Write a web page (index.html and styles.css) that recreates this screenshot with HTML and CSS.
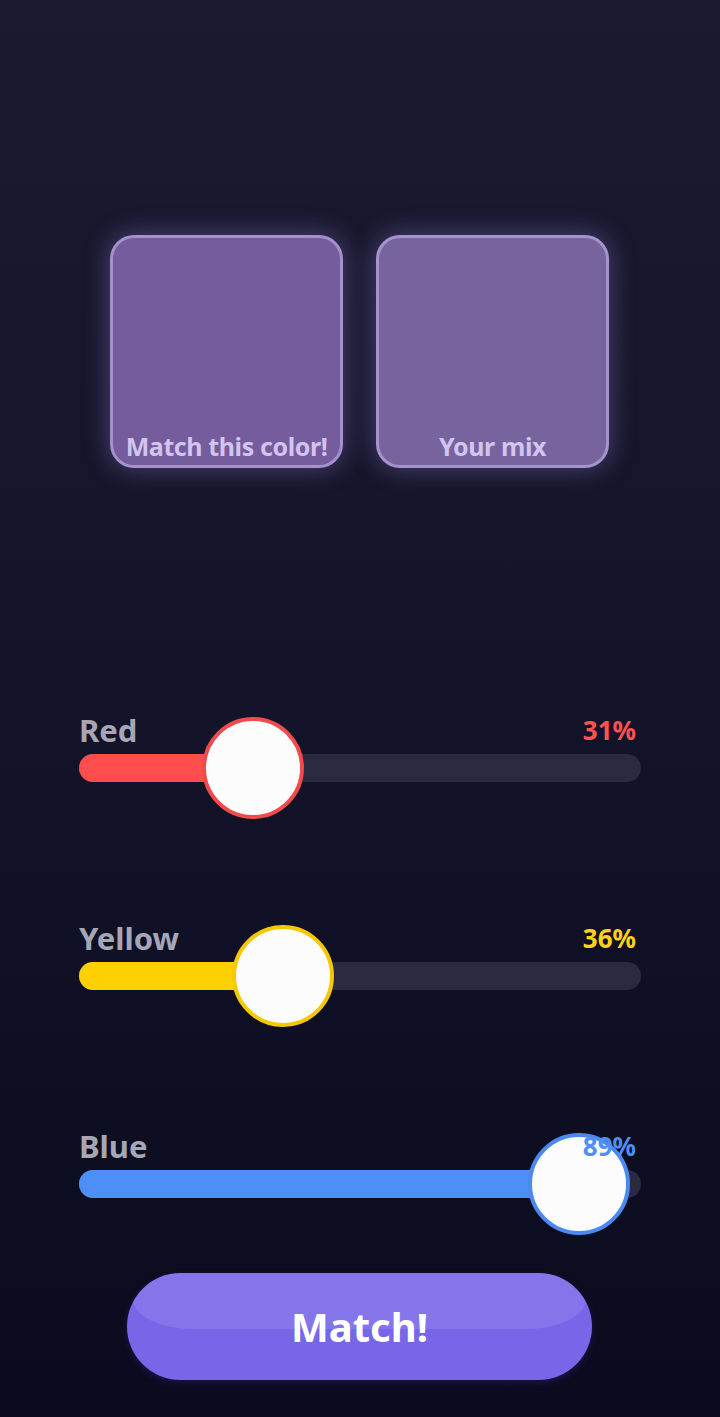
FILE: index.html
```html
<!DOCTYPE html>
<html lang="en">
<head>
    <meta charset="UTF-8">
    <meta name="viewport" content="width=device-width, initial-scale=1.0">
    <title>Color Mixer</title>
    <link rel="stylesheet" href="styles.css">
</head>
<body>
    <div class="screen">
        <div class="swatches">
            <div class="swatch target">
                <span>Match this color!</span>
            </div>
            <div class="swatch mix">
                <span>Your mix</span>
            </div>
        </div>

        <div class="sliders">
            <div class="slider red">
                <div class="slider-head">
                    <label>Red</label>
                    <span class="value">31%</span>
                </div>
                <div class="track">
                    <div class="fill" style="width: 31%"></div>
                    <div class="thumb" style="left: 31%"></div>
                </div>
            </div>

            <div class="slider yellow">
                <div class="slider-head">
                    <label>Yellow</label>
                    <span class="value">36%</span>
                </div>
                <div class="track">
                    <div class="fill" style="width: 36%"></div>
                    <div class="thumb" style="left: 36%"></div>
                </div>
            </div>

            <div class="slider blue">
                <div class="slider-head">
                    <label>Blue</label>
                    <span class="value">89%</span>
                </div>
                <div class="track">
                    <div class="fill" style="width: 89%"></div>
                    <div class="thumb" style="left: 89%"></div>
                </div>
            </div>
        </div>

        <div class="actions">
            <button class="match-btn">Match!</button>
        </div>
    </div>
</body>
</html>
```

FILE: styles.css
```css
body {
    margin: 0;
    height: 1417px;
    background: linear-gradient(180deg, #1a1a31 0%, #131329 50%, #0b0b1f 100%);
    font-family: "Noto Sans", sans-serif;
    font-weight: 700;
    overflow: hidden;
}
.screen {
    padding: 235px 79px 0;
}

/* colour boxes */
.swatches {
    display: flex;
    justify-content: center;
    gap: 33px;
    padding-right: 1px;
}
.swatch {
    width: 233px;
    height: 233px;
    box-sizing: border-box;
    border: 3px solid rgba(196, 178, 234, 0.6);
    border-radius: 24px;
    box-shadow: 0 0 24px 2px rgba(170, 140, 230, 0.35);
    display: flex;
    align-items: flex-end;
    justify-content: center;
    padding-bottom: 2px;
}
.swatch span {
    font-size: 25px;
    color: #d2c4ee;
    letter-spacing: -0.4px;
    white-space: nowrap;
}
.target {
    background: #745c9d;
}
.mix {
    background: #77649e;
}

/* sliders */
.sliders {
    margin-top: 242px;
    display: flex;
    flex-direction: column;
    gap: 136px;
}
.slider-head {
    display: flex;
    justify-content: space-between;
    align-items: center;
    height: 40px;
    padding-right: 5px;
}
.slider-head label {
    font-size: 31px;
    color: #a7a6b7;
}
.value {
    font-size: 26px;
    position: relative;
    z-index: 2;
}
.track {
    position: relative;
    margin-top: 4px;
    height: 28px;
    border-radius: 14px;
    background: #2a2a40;
}
.fill {
    height: 100%;
    border-radius: 14px;
}
.thumb {
    position: absolute;
    top: 50%;
    width: 94px;
    height: 94px;
    border: 4px solid;
    border-radius: 50%;
    background: #fcfcfc;
    transform: translate(-50%, -50%);
}
.red .value { color: #ff5252; }
.red .fill { background: #ff4c4c; }
.red .thumb { border-color: #f04a4a; }
.yellow .value { color: #ffd21a; }
.yellow .fill { background: #ffd000; }
.yellow .thumb { border-color: #f5c800; margin-left: 2px; }
.blue .value { color: #4f8ff5; }
.blue .fill { background: #4d8ef7; }
.blue .thumb { border-color: #4a8af0; }

/* action button */
.actions {
    display: flex;
    justify-content: center;
    margin-top: 75px;
    padding-right: 1px;
}
.match-btn {
    position: relative;
    width: 465px;
    height: 107px;
    border: none;
    border-radius: 54px;
    background: #7766e8;
    box-shadow: 0 3px 6px rgba(40, 30, 120, 0.5);
    color: #fff;
    font-family: inherit;
    font-weight: 700;
    font-size: 40px;
    cursor: pointer;
    overflow: hidden;
}
.match-btn::before {
    content: "";
    position: absolute;
    top: 0;
    left: 6px;
    right: 6px;
    height: 56px;
    border-radius: 0 0 60px 60px / 0 0 30px 30px;
    background: rgba(255, 255, 255, 0.1);
}
```
